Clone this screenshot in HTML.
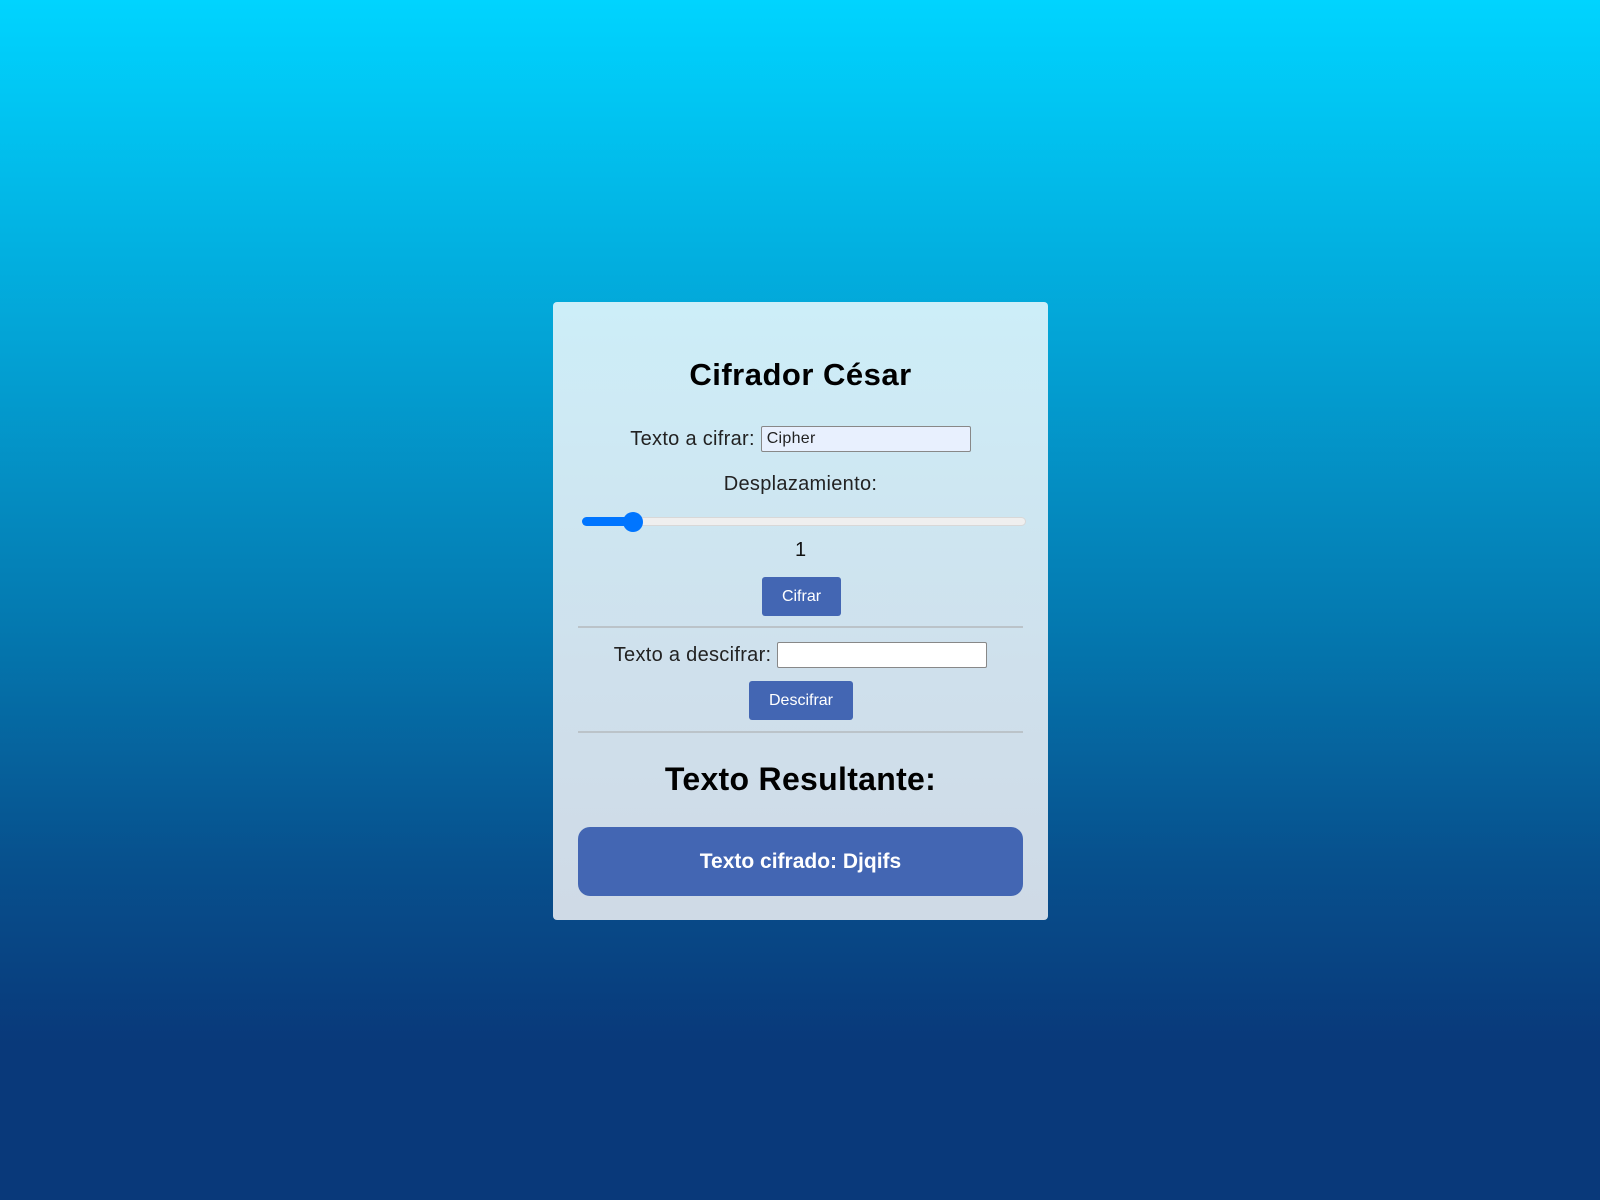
<!DOCTYPE html>
<html><head><meta charset="utf-8"><style>
html,body{margin:0;padding:0;width:1600px;height:1200px;overflow:hidden;}
body{background:linear-gradient(180deg,#00d4ff 0%,#03a4d6 28%,#0479b0 52%,#07508d 72%,#09397a 87%,#09397a 100%);font-family:"Liberation Sans",sans-serif;position:relative;}
.card{position:absolute;left:553px;top:302px;width:495px;height:618px;border-radius:4px;background:linear-gradient(180deg,#cdeef8 0%,#cfe0ec 60%,#cfdae6 100%);}
.a{position:absolute;left:0;width:100%;text-align:center;}
h1{margin:0;font-size:31px;font-weight:bold;color:#000;letter-spacing:0.5px;}
.lbl{font-size:20px;color:#222;letter-spacing:0.3px;}
.inp{display:inline-block;vertical-align:middle;border:1px solid #888;border-radius:2px;box-sizing:border-box;}
.btn{position:absolute;background:#4366b3;color:#fff;border-radius:3px;font-size:16px;text-align:center;}
.hr{position:absolute;left:25px;width:445px;height:2px;background:#bbc3c9;}
</style></head><body>
<div class="card">
  <div class="a" style="top:55px"><h1>Cifrador César</h1></div>
  <div class="a lbl" style="top:123px;height:28px;line-height:28px">Texto a cifrar: <span class="inp" style="width:210px;height:26px;background:#e8f0fe;text-align:left;font-size:16px;line-height:24px;padding-left:5px;color:#222;vertical-align:top;margin-top:1px">Cipher</span></div>
  <div class="a lbl" style="top:171px">Desplazamiento:</div>
  <div style="position:absolute;left:29px;top:215px;width:444px;height:9px;border-radius:5px;background:#efefef;border:1px solid #d8d8d8;box-sizing:border-box"></div>
  <div style="position:absolute;left:29px;top:215px;width:55px;height:9px;border-radius:5px;background:#0075ff"></div>
  <div style="position:absolute;left:70px;top:210px;width:20px;height:20px;border-radius:50%;background:#0075ff"></div>
  <div class="a" style="top:237px;font-size:20px;color:#111">1</div>
  <div class="btn" style="left:209px;top:275px;width:79px;height:39px;line-height:39px">Cifrar</div>
  <div class="hr" style="top:324px"></div>
  <div class="a lbl" style="top:339px;height:28px;line-height:28px">Texto a descifrar: <span class="inp" style="width:210px;height:26px;background:#fff;vertical-align:top;margin-top:1px"></span></div>
  <div class="btn" style="left:196px;top:379px;width:104px;height:39px;line-height:39px">Descifrar</div>
  <div class="hr" style="top:429px"></div>
  <div class="a" style="top:459px;font-size:32px;font-weight:bold;color:#000;letter-spacing:0.3px">Texto Resultante:</div>
  <div style="position:absolute;left:25px;top:525px;width:445px;height:69px;border-radius:12px;background:#4366b3;color:#fff;font-weight:bold;font-size:21px;text-align:center;line-height:69px">Texto cifrado: Djqifs</div>
</div>
</body></html>
